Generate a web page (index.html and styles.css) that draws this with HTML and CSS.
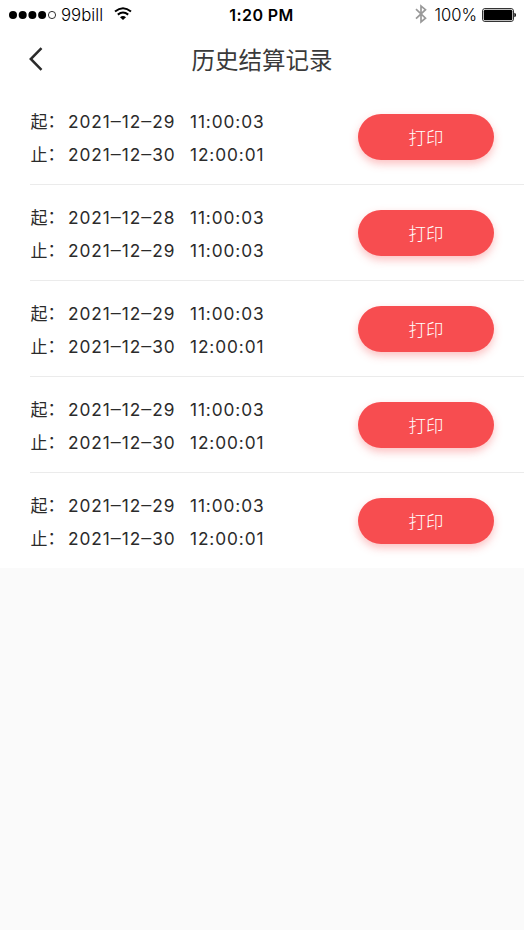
FILE: index.html
```html
<!DOCTYPE html>
<html lang="zh-CN">
<head>
<meta charset="utf-8">
<title>历史结算记录</title>
<link rel="stylesheet" href="styles.css">
</head>
<body>
<header class="status">
  <div class="status-left">
    <svg class="signal" width="48" height="10" viewBox="0 0 48 10"><circle cx="4" cy="5" r="4"/><circle cx="13.7" cy="5" r="4"/><circle cx="23.4" cy="5" r="4"/><circle cx="33.1" cy="5" r="4"/><circle cx="43" cy="5" r="3.6" fill="none" stroke="#000" stroke-width=".8"/></svg>
    <span class="carrier">99bill</span>
    <svg class="wifi" width="18" height="14" viewBox="0 0 18 14"><path d="M1 4.5Q9-2 17 4.5M3.8 7.6Q9 3.5 14.2 7.6" fill="none" stroke="#000" stroke-width="2"/><path d="M6 10.2Q9 8 12 10.2L9 13Z"/></svg>
  </div>
  <div class="clock">1:20 PM</div>
  <div class="status-right">
    <svg class="bluetooth" width="12" height="20" viewBox="0 0 12 20"><path d="M1 5.2L10.5 14.2L6 18V2L10.5 5.7L1 14.7" fill="none" stroke="#999" stroke-width="1.7"/></svg>
    <span class="percent">100%</span>
    <svg class="battery" width="34" height="14" viewBox="0 0 34 14"><rect x=".5" y=".5" width="31" height="13" rx="2.5" fill="none" stroke="#000" stroke-width=".8"/><rect x="1.7" y="1.7" width="28.6" height="10.6" rx="1.5"/><path d="M32.4 4.7Q34 5 34 7T32.4 9.3Z"/></svg>
  </div>
</header>
<nav class="nav">
  <svg class="back" width="14" height="24" viewBox="0 0 14 24"><path d="M12.5 1.2L1.8 12L12.5 22.8" fill="none" stroke="#2b2b2b" stroke-width="2.5"/></svg>
  <h1>历史结算记录</h1>
</nav>
<main class="list">
  <section class="row">
    <div class="times">
      <p><span class="label">起<b>：</b></span><span class="date">2021<i>–</i>12<i>–</i>29</span><span class="time">11:00:03</span></p>
      <p><span class="label">止<b>：</b></span><span class="date">2021<i>–</i>12<i>–</i>30</span><span class="time">12:00:01</span></p>
    </div>
    <button class="print">打印</button>
  </section>
  <section class="row">
    <div class="times">
      <p><span class="label">起<b>：</b></span><span class="date">2021<i>–</i>12<i>–</i>28</span><span class="time">11:00:03</span></p>
      <p><span class="label">止<b>：</b></span><span class="date">2021<i>–</i>12<i>–</i>29</span><span class="time">11:00:03</span></p>
    </div>
    <button class="print">打印</button>
  </section>
  <section class="row">
    <div class="times">
      <p><span class="label">起<b>：</b></span><span class="date">2021<i>–</i>12<i>–</i>29</span><span class="time">11:00:03</span></p>
      <p><span class="label">止<b>：</b></span><span class="date">2021<i>–</i>12<i>–</i>30</span><span class="time">12:00:01</span></p>
    </div>
    <button class="print">打印</button>
  </section>
  <section class="row">
    <div class="times">
      <p><span class="label">起<b>：</b></span><span class="date">2021<i>–</i>12<i>–</i>29</span><span class="time">11:00:03</span></p>
      <p><span class="label">止<b>：</b></span><span class="date">2021<i>–</i>12<i>–</i>30</span><span class="time">12:00:01</span></p>
    </div>
    <button class="print">打印</button>
  </section>
  <section class="row">
    <div class="times">
      <p><span class="label">起<b>：</b></span><span class="date">2021<i>–</i>12<i>–</i>29</span><span class="time">11:00:03</span></p>
      <p><span class="label">止<b>：</b></span><span class="date">2021<i>–</i>12<i>–</i>30</span><span class="time">12:00:01</span></p>
    </div>
    <button class="print">打印</button>
  </section>
</main>
</body>
</html>
```
FILE: styles.css
```css
* { box-sizing: border-box; }
body {
  margin: 0;
  min-height: 930px;
  background: #fafafa;
  color: #2b2b2b;
  font-family: Inter, "Noto Sans CJK SC", sans-serif;
}
.status {
  display: grid;
  grid-template-columns: 1fr auto 1fr;
  height: 30px;
  padding: 0 8px 0 9px;
  background: #fff;
  color: #000;
  font-size: 16px;
  line-height: 30px;
}
.status-left, .status-right { display: flex; align-items: center; }
.status-right { justify-content: flex-end; }
.status svg { flex: none; }
.signal { margin-top: -1px; }
.carrier { margin-left: 4px; font-size: 16.8px; font-weight: 300; }
.wifi { margin: -2px 0 0 11px; }
.clock { margin-left: -2px; font-weight: 600; letter-spacing: .4px; }
.bluetooth { margin-top: -2px; }
.percent { margin: 0 5px 0 7px; font-size: 16.6px; font-weight: 350; }
.battery { margin-top: -1px; }
.nav {
  display: grid;
  grid-template-columns: 60px 1fr 60px;
  align-items: center;
  height: 59px;
  background: #fff;
}
.back { margin: -2px 0 0 29px; }
.nav h1 {
  margin: 0;
  padding-top: 2px;
  text-align: center;
  font-size: 23.5px;
  font-weight: 400;
  line-height: 57px;
  height: 59px;
  color: #3a3a3a;
}
.list { background: #fff; }
.row {
  display: flex;
  justify-content: space-between;
  align-items: center;
  height: 96px;
  margin-left: 30px;
  padding-right: 30px;
  border-bottom: 1px solid #ebebeb;
}
.row:last-child { height: 95px; border-bottom: 0; }
.times p {
  display: flex;
  margin: 0;
  font-size: 17.3px;
  line-height: 33px;
  white-space: nowrap;
}
.times { padding-top: 2px; }
.label {
  width: 38px;
  padding: 1px 0 0 .5px;
  font-size: 17px;
  line-height: 32px;
}
.label b {
  position: relative;
  top: -1px;
  font-weight: 400;
}
.date { width: 122px; letter-spacing: .95px; }
.date i {
  font-size: 20px;
  font-style: normal;
  font-weight: 300;
  line-height: 1;
}
.time { letter-spacing: .9px; }
.print {
  width: 136px;
  height: 46px;
  margin: 0;
  padding: 0;
  border: 0;
  border-radius: 23px;
  background: #f74d50;
  box-shadow: 0 4px 9px rgba(247, 77, 80, .35);
  color: #fff;
  font: 300 17.5px/45px "Noto Sans CJK SC", sans-serif;
}
```
